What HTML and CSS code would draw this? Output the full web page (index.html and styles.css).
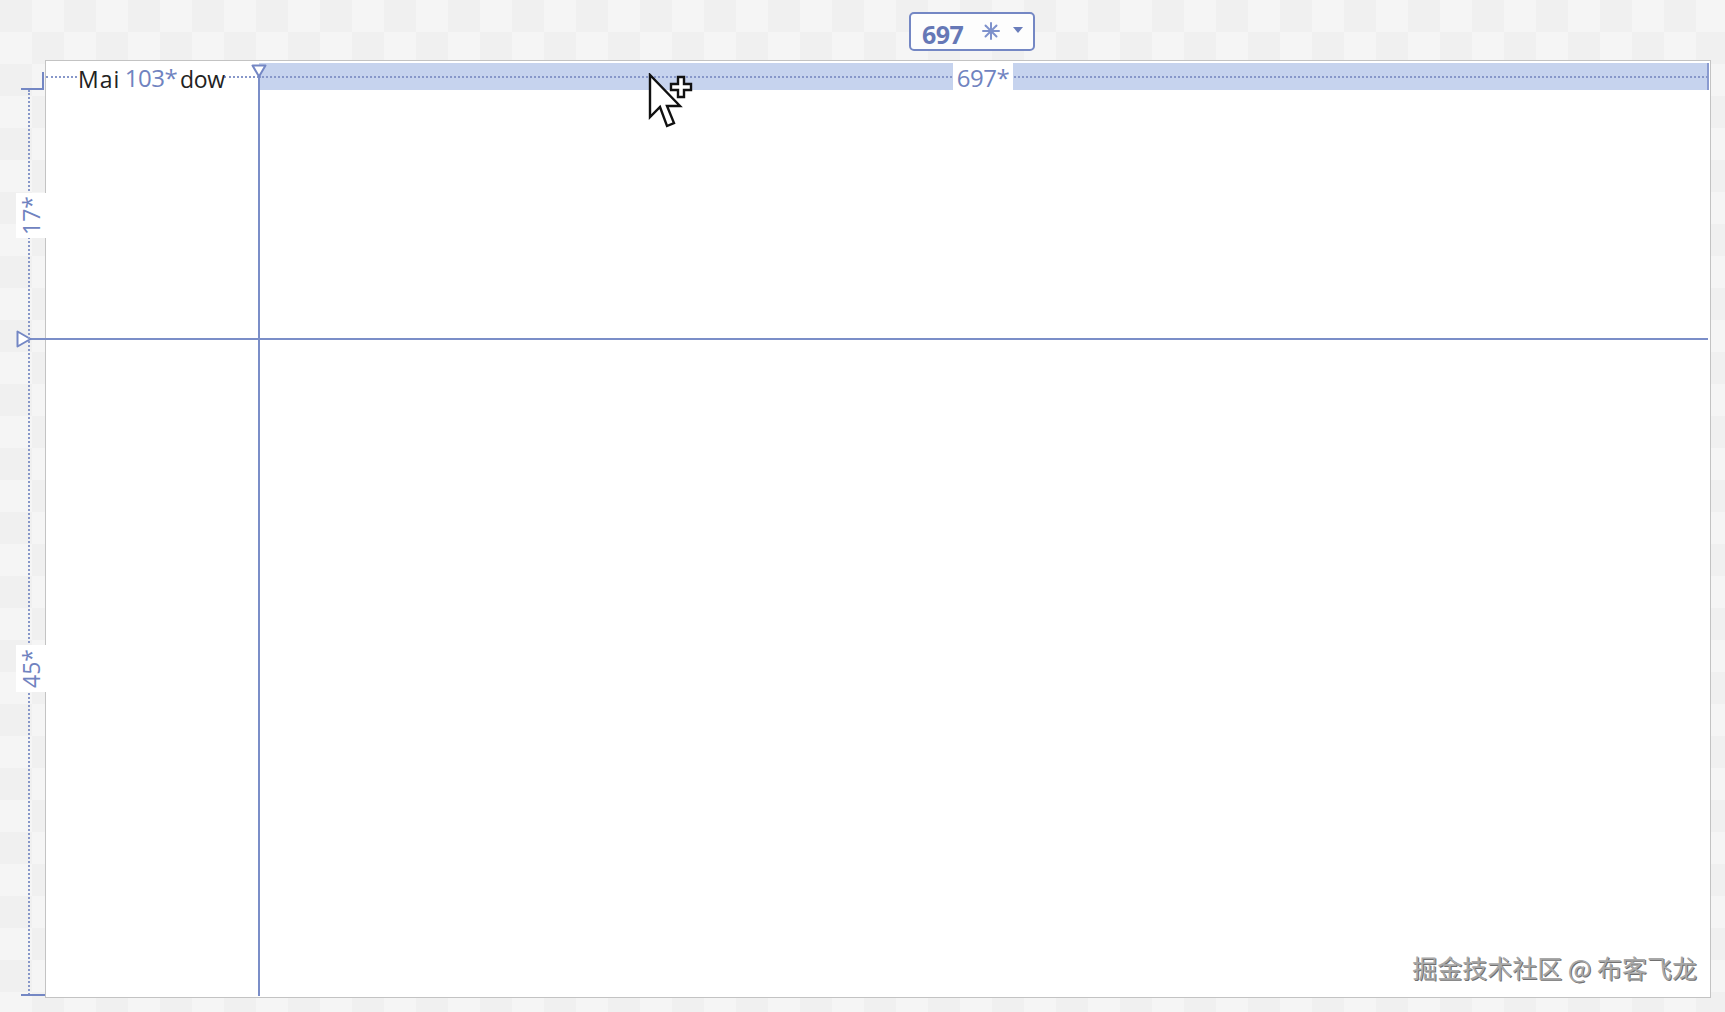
FILE: index.html
```html
<!DOCTYPE html>
<html lang="zh">
<head>
<meta charset="utf-8">
<title>Grid designer</title>
<link rel="stylesheet" href="styles.css">
</head>
<body>
<div class="stage">
  <div class="size-box">
    <span class="size-value">697</span>
    <svg class="star" width="20" height="20" viewBox="0 0 20 20"><g stroke="#7f92cc" stroke-width="2" stroke-linecap="round"><line x1="10" y1="2" x2="10" y2="18"/><line x1="2" y1="10" x2="18" y2="10"/><line x1="4.5" y1="4.5" x2="15.5" y2="15.5"/><line x1="15.5" y1="4.5" x2="4.5" y2="15.5"/></g></svg>
    <svg class="caret" width="10" height="6" viewBox="0 0 10 6"><path d="M0 0 H10 L5 6 Z" fill="#6a7dbb"/></svg>
  </div>

  <div class="window">
    <div class="title-row">
      <div class="title-left">
        <span class="title-text title-a">Mai</span>
        <span class="col-label">103*</span>
        <span class="title-text">dow</span>
      </div>
      <div class="title-bar"></div>
    </div>
  </div>

  <div class="dots-top"></div>
  <div class="dots-top-left"></div>
  <div class="col-line"></div>
  <div class="row-line"></div>
  <svg class="tri-top" width="16" height="14" viewBox="0 0 16 14"><path d="M1.5 1.5 H14.5 L8 12.5 Z" fill="#fff" stroke="#7487c4" stroke-width="2" stroke-linejoin="round"/></svg>
  <svg class="tri-left" width="16" height="18" viewBox="0 0 16 18"><path d="M1.5 1.5 V16.5 L14.5 9 Z" fill="#fff" stroke="#7487c4" stroke-width="2" stroke-linejoin="round"/></svg>

  <div class="label label-697">697*</div>

  <div class="ruler-dots"></div>
  <div class="corner-top"></div>
  <div class="corner-bottom"></div>
  <div class="vlabel vlabel-17"><span>17*</span></div>
  <div class="vlabel vlabel-45"><span>45*</span></div>

  <svg class="cursor" width="48" height="60" viewBox="0 0 48 60">
    <path d="M2 2 L2 44 L12 34 L19 53 L26 50 L19 33 L32 33 Z" fill="#fff" stroke="#111" stroke-width="2.4" stroke-linejoin="miter"/>
    <path d="M30 4 H36 V11 H43 V17 H36 V24 H30 V17 H23 V11 H30 Z" fill="#fff" stroke="#111" stroke-width="2.4"/>
  </svg>

  <div class="watermark">掘金技术社区 @ 布客飞龙</div>
</div>
</body>
</html>
```
FILE: styles.css
```css
html, body {
  margin: 0;
  padding: 0;
}
body {
  width: 1725px;
  height: 1012px;
  overflow: hidden;
  background-color: #f3f3f3;
  background-image: repeating-conic-gradient(#f5f5f5 0 25%, #f0f0f0 0 50%);
  background-size: 64px 64px;
  font-family: "Open Sans", "Noto Sans", "Noto Sans CJK SC", sans-serif;
}
.stage {
  position: relative;
  width: 1725px;
  height: 1012px;
}
.size-box {
  position: absolute;
  left: 909px;
  top: 12px;
  width: 111px;
  height: 35px;
  border: 2px solid #7487c4;
  border-radius: 5px;
  background: #fdfdfd;
  display: flex;
  align-items: center;
  padding-left: 11px;
}
.size-value {
  font-family: "Open Sans", sans-serif;
  font-weight: 700;
  font-size: 25px;
  color: #6678b6;
  letter-spacing: -0.5px;
  line-height: 1;
  margin-top: 5px;
}
.star {
  margin-left: 18px;
  margin-top: -2px;
}
.caret {
  margin-left: 12px;
  margin-top: -3px;
}
.window {
  position: absolute;
  left: 45px;
  top: 60px;
  width: 1664px;
  height: 936px;
  border: 1px solid #c3c3c3;
  background: #ffffff;
}
.title-row {
  display: flex;
  height: 27px;
  margin-top: 2px;
}
.title-left {
  width: 213px;
  display: flex;
  align-items: flex-start;
  padding-left: 32px;
  box-sizing: border-box;
  position: relative;
  z-index: 2;
}
.title-text {
  font-family: "Open Sans", sans-serif;
  font-size: 23px;
  line-height: 30px;
  margin-top: 1px;
  color: #222;
  letter-spacing: -0.3px;
}
.title-a {
  width: 44px;
  letter-spacing: 1px;
  overflow: hidden;
  white-space: nowrap;
}
.col-label {
  width: 58px;
  height: 31px;
  margin-top: -1px;
  background: #ffffff;
  color: #7083c0;
  font-family: "Open Sans", sans-serif;
  font-size: 24px;
  line-height: 31px;
  text-align: center;
  letter-spacing: -0.5px;
}
.title-bar {
  flex: 1;
  background: #c6d3ee;
  border-right: 2px solid #8a9bd0;
  margin-right: 1px;
}
.dots-top {
  position: absolute;
  left: 259px;
  top: 76px;
  width: 1449px;
  height: 0;
  border-top: 2px dotted #8797c9;
}
.dots-top-left {
  position: absolute;
  left: 46px;
  top: 76px;
  width: 31px;
  height: 0;
  border-top: 2px dotted #8797c9;
}
.dots-top-left::after {
  content: "";
  position: absolute;
  left: 178px;
  top: -2px;
  width: 35px;
  border-top: 2px dotted #8797c9;
}
.col-line {
  position: absolute;
  left: 258px;
  top: 70px;
  width: 2px;
  height: 926px;
  background: #7b8ec8;
}
.row-line {
  position: absolute;
  left: 30px;
  top: 338px;
  width: 1678px;
  height: 2px;
  background: #7b8ec8;
}
.tri-top {
  position: absolute;
  left: 251px;
  top: 64px;
}
.tri-left {
  position: absolute;
  left: 16px;
  top: 330px;
}
.label {
  position: absolute;
  background: #ffffff;
  color: #7083c0;
  font-family: "Open Sans", sans-serif;
  font-size: 24px;
  line-height: 31px;
  height: 31px;
  text-align: center;
  letter-spacing: -0.5px;
}
.label-697 {
  left: 953px;
  top: 62px;
  width: 60px;
}
.ruler-dots {
  position: absolute;
  left: 28px;
  top: 90px;
  width: 0;
  height: 905px;
  border-left: 2px dotted #8797c9;
}
.corner-top {
  position: absolute;
  left: 21px;
  top: 72px;
  width: 21px;
  height: 16px;
  border-right: 2px solid #7487c4;
  border-bottom: 2px solid #7487c4;
}
.corner-bottom {
  position: absolute;
  left: 21px;
  top: 994px;
  width: 24px;
  height: 2px;
  background: #7487c4;
}
.vlabel {
  position: absolute;
  left: 16px;
  width: 30px;
  background: #ffffff;
  display: flex;
  align-items: center;
  justify-content: center;
}
.vlabel span {
  display: block;
  transform: rotate(-90deg);
  color: #7083c0;
  font-family: "Open Sans", sans-serif;
  font-size: 23px;
  line-height: 1;
  white-space: nowrap;
}
.vlabel-17 {
  top: 193px;
  height: 45px;
}
.vlabel-45 {
  top: 645px;
  height: 47px;
}
.cursor {
  position: absolute;
  left: 648px;
  top: 73px;
}
.watermark {
  position: absolute;
  right: 28px;
  top: 951px;
  font-family: "Noto Sans CJK SC", sans-serif;
  font-size: 25px;
  line-height: 32px;
  color: #a8a8a8;
  text-shadow: 1px 1px 0 #707070, -1px -1px 0 #ffffff;
}
```
